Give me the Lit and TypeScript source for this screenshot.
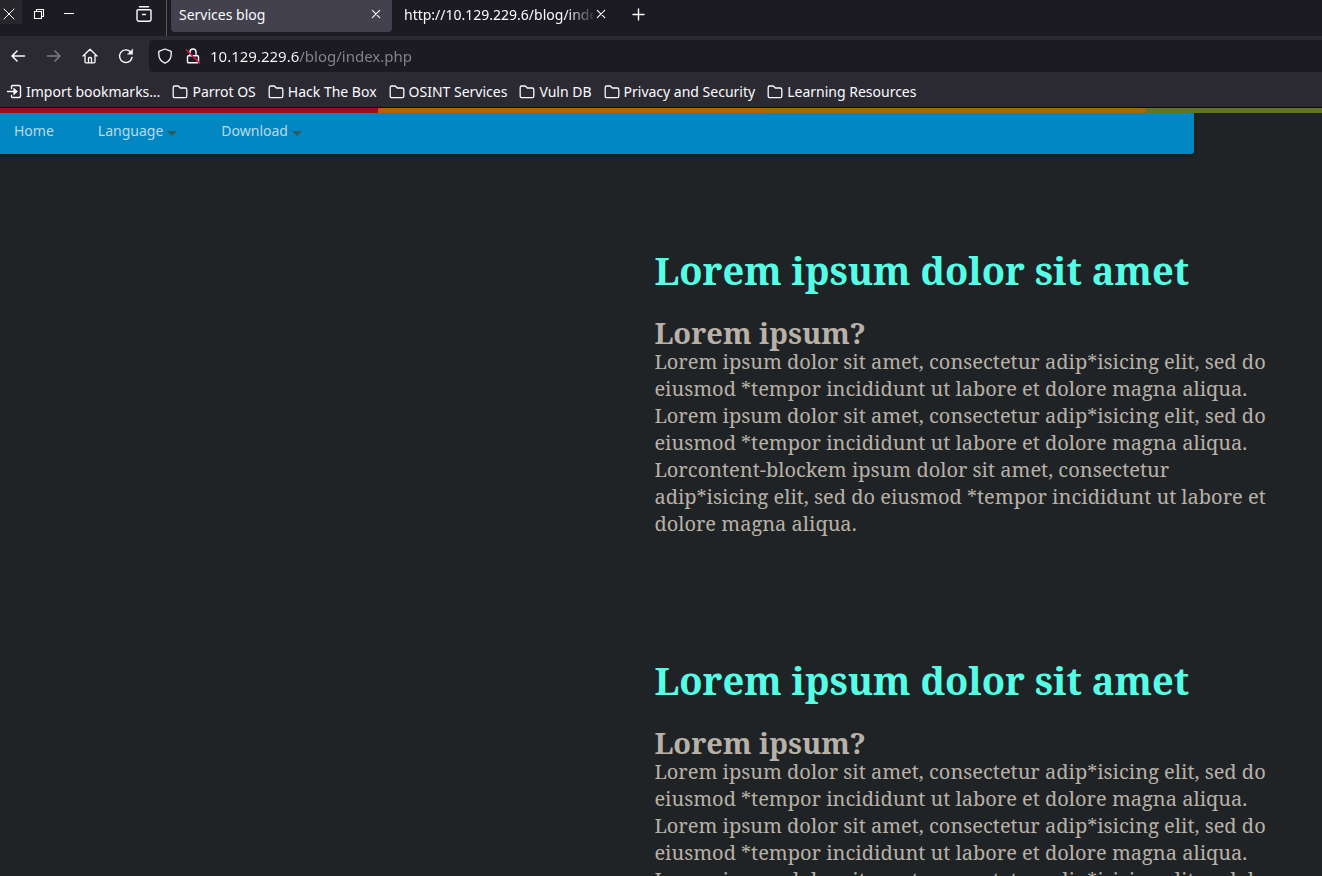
import { LitElement, html, css, svg } from "lit";
import { customElement } from "lit/decorators.js";

const bookmarks = ["Parrot OS", "Hack The Box", "OSINT Services", "Vuln DB", "Privacy and Security", "Learning Resources"];

const sentence = [
  "Lorem ipsum dolor sit amet, consectetur adip*isicing elit, sed do",
  "eiusmod *tempor incididunt ut labore et dolore magna aliqua.",
];
const posts = [
  [
    ...sentence,
    ...sentence,
    "Lorcontent-blockem ipsum dolor sit amet, consectetur",
    "adip*isicing elit, sed do eiusmod *tempor incididunt ut labore et",
    "dolore magna aliqua.",
  ],
  [...sentence, ...sentence, ...sentence],
];

const icon = (body: unknown, size = 16) => html`<svg
  width=${size} height=${size} viewBox="0 0 16 16" fill="none" stroke="currentColor"
  stroke-width="1.4" stroke-linecap="round" stroke-linejoin="round" aria-hidden="true">${body}</svg>`;

const glyphs = {
  closeWindow: svg`<path d="M3 3l10 10M13 3L3 13" stroke-width="1"/>`,
  restore: svg`<path d="M3.5 5.5h7v7h-7zM5.5 5.500v-2h7v7h-2" stroke-width="1.1" stroke-linejoin="miter"/>`,
  minimise: svg`<path d="M3 7.500h10" stroke-width="1" stroke-linecap="butt"/>`,
  recent: svg`<path d="M3.5 .8h9M2 3.700h12a1 1 0 0 1 1 1v8.600a2 2 0 0 1-2 2H3a2 2 0 0 1-2-2V4.700a1 1 0 0 1 1-1zM6.500 8.500h3" stroke-width="1.4"/>`,
  close: svg`<path d="M4.300 3.300l7.400 7.400M11.700 3.300l-7.400 7.400" stroke-width="1.1"/>`,
  plus: svg`<path d="M8.500 2v11M3 7.500h11"/>`,
  back: svg`<path d="M14.5 8H2M7 3L2 8l5 5" stroke-width="1.5"/>`,
  forward: svg`<path d="M1.5 8H14M9 3l5 5-5 5" stroke-width="1.5"/>`,
  home: svg`<path d="M1 8l7-6.700L15 8M3 7v6.800a1 1 0 0 0 1 1h8a1 1 0 0 0 1-1V7M6.500 14.500v-4a1 1 0 0 1 1-1h1a1 1 0 0 1 1 1v4" stroke-width="1.3"/>`,
  reload: svg`<path d="M14 9.500A6.300 6.300 0 1 1 12.600 4"/><path d="M14.600 1.300v4.900H9.700z" fill="currentColor" stroke-width=".5"/>`,
  shield: svg`<path d="M8 1l6.200 2.400v2.800c0 3.800-2.400 7.400-6.200 9-3.800-1.600-6.200-5.200-6.200-9V3.400z" stroke-width="1.3"/>`,
  lock: svg`<path d="M3.5 7.700h9a1 1 0 0 1 1 1v5a1 1 0 0 1-1 1h-9a1 1 0 0 1-1-1v-5a1 1 0 0 1 1-1zM5 7.500V4a3 3 0 0 1 6 0v3.500"/><path d="M1.500 2l13 13" stroke="#e2144c" stroke-width="1.5"/>`,
  importIn: svg`<path d="M5.5 4.500v-2a1 1 0 0 1 1-1H13a1.500 1.500 0 0 1 1.500 1.500v9a1.500 1.500 0 0 1-1.500 1.500H6.500a1 1 0 0 1-1-1v-1M1.500 7.500h7"/><path d="M8 4.500l3.500 3L8 10.500z" fill="currentColor" stroke-width=".8"/>`,
  folder: svg`<path d="M2.700 2h3.600l2 2h5a1.500 1.500 0 0 1 1.500 1.500v6.700a1.500 1.500 0 0 1-1.500 1.500H2.700a1.500 1.500 0 0 1-1.500-1.500V3.500A1.500 1.500 0 0 1 2.700 2z" stroke-width="1.3"/>`,
};

@customElement("browser-chrome")
class BrowserChrome extends LitElement {
  static styles = css`
    :host { display: block; color: #fbfbfe; background: #2b2a33; font: 14px/20px "Noto Sans", sans-serif; border-bottom: 1px solid #0c0c0d; }
    button { border: 0; padding: 0; background: none; color: inherit; font: inherit; display: flex; align-items: center; }
    svg { display: block; flex: none; }
    a { color: inherit; text-decoration: none; display: flex; align-items: center; gap: 4px; white-space: nowrap; }
    .titlebar { display: flex; height: 36px; background: #1c1b22; }
    .window { display: flex; align-items: flex-start; width: 166px; border-right: 1px solid #5b5b66; }
    .window button { height: 28px; justify-content: center; width: 30px; }
    .window .quit { width: 22px; margin-right: 2px; padding-left: 1px; justify-content: flex-start; background: linear-gradient(#26262b 24px, transparent 24px); }
    .window .recent { margin-left: auto; margin-right: 7px; }
    .tab { display: flex; align-items: center; width: 221px; height: 32px; padding: 0 8px 3px; box-sizing: border-box; }
    .tab.active { margin: 0 4px; background: #42414d; border-radius: 0 0 4px 4px; }
    .label { flex: 1; min-width: 0; overflow: hidden; white-space: nowrap; }
    .label.fade { mask-image: linear-gradient(90deg, #000 86%, transparent 102%); }
    .new { height: 29px; padding: 0 13px; }
    .toolbar { display: flex; align-items: center; height: 40px; }
    .tools { display: flex; gap: 20px; padding: 0 15px 0 10px; }
    .url { display: flex; align-items: center; gap: 12px; flex: 1; height: 32px; padding-left: 8px; border-radius: 4px 0 0 4px; background: #1c1b22; }
    .dim { opacity: .4; }
    input { flex: 1; min-width: 0; border: 0; padding: 0; outline: 0; margin-left: -3px; font: 15px/20px "Noto Sans", sans-serif; color: transparent; background: linear-gradient(90deg, #fbfbfe 89px, #87868d 89px); -webkit-background-clip: text; background-clip: text; }
    .bookmarks { display: flex; align-items: center; gap: 12px; height: 31px; padding: 0 6px; }
  `;
  render() {
    return html`
      <div class="titlebar">
        <div class="window">
          <button class="quit" aria-label="Close window">${icon(glyphs.closeWindow)}</button>
          <button aria-label="Restore window">${icon(glyphs.restore)}</button>
          <button aria-label="Minimise window">${icon(glyphs.minimise)}</button>
          <button class="recent" aria-label="Recent browsing">${icon(glyphs.recent)}</button>
        </div>
        <div class="tab active"><button class="label">Services blog</button><button aria-label="Close tab">${icon(glyphs.close)}</button></div>
        <div class="tab"><button class="label fade">http://10.129.229.6/blog/index.php</button><button aria-label="Close tab">${icon(glyphs.close)}</button></div>
        <button class="new" aria-label="New tab">${icon(glyphs.plus)}</button>
      </div>
      <div class="toolbar">
        <div class="tools">
          <button aria-label="Back">${icon(glyphs.back)}</button>
          <button class="dim" aria-label="Forward">${icon(glyphs.forward)}</button>
          <button aria-label="Home">${icon(glyphs.home)}</button>
          <button aria-label="Reload">${icon(glyphs.reload)}</button>
        </div>
        <div class="url">
          ${icon(glyphs.shield)}${icon(glyphs.lock)}
          <input type="text" aria-label="Address" value="10.129.229.6/blog/index.php" />
        </div>
      </div>
      <nav class="bookmarks" aria-label="Bookmarks">
        <a href="#">${icon(glyphs.importIn)}Import bookmarks…</a>
        ${bookmarks.map((name) => html`<a href="#">${icon(glyphs.folder)}${name}</a>`)}
      </nav>`;
  }
}

@customElement("blog-page")
class BlogPage extends LitElement {
  static styles = css`
    :host { display: block; background: #202325; overflow: hidden; }
    .stripe { display: flex; height: 5px; }
    .red { flex: 378; background: #970e1e; }
    .orange { flex: 385; background: #b96004; }
    .amber { flex: 383; background: #a56900; }
    .green { flex: 176; background: #5f7621; }
    .menu { display: flex; gap: 16px; width: 90.3%; height: 41px; background: #0287c3; border-radius: 0 0 3px 0; box-shadow: 0 2px 5px rgba(0, 0, 0, .3); font: 14px/20px "Noto Sans", sans-serif; }
    .menu a { display: flex; padding: 8px 14px; color: #b9dbe5; text-decoration: none; }
    .caret { width: 0; height: 0; align-self: center; margin-left: 4px; border: 5px solid transparent; border-top-color: #2b5c60; border-bottom: 0; }
    main { padding: 92px 2% 0 49.5%; font: 20px/27px "Noto Serif", "DejaVu Serif", serif; color: #b8b1a7; }
    article { padding-bottom: 119px; }
    h1, h2, p { margin: 0; }
    h1 { font-size: 38px; line-height: 48px; color: #55ffe6; white-space: nowrap; }
    h2 { font-size: 29px; line-height: 27px; padding: 25px 0 2px; }
  `;
  render() {
    return html`
      <div class="stripe"><div class="red"></div><div class="orange"></div><div class="amber"></div><div class="green"></div></div>
      <nav class="menu" aria-label="Site">
        <a href="#">Home</a>
        <a href="#">Language<span class="caret"></span></a>
        <a href="#">Download<span class="caret"></span></a>
      </nav>
      <main>
        ${posts.map((lines) => html`<article>
          <h1>Lorem ipsum dolor sit amet</h1>
          <h2>Lorem ipsum?</h2>
          <p>${lines.map((line) => html`${line}<br />`)}</p>
        </article>`)}
      </main>`;
  }
}

@customElement("app-root")
class AppRoot extends LitElement {
  static styles = css`
    :host { display: flex; flex-direction: column; height: 100vh; overflow: hidden; background: #202325; }
    browser-chrome { flex: none; }
    blog-page { flex: 1; min-height: 0; }
  `;
  render() {
    return html`<browser-chrome></browser-chrome><blog-page></blog-page>`;
  }
}
